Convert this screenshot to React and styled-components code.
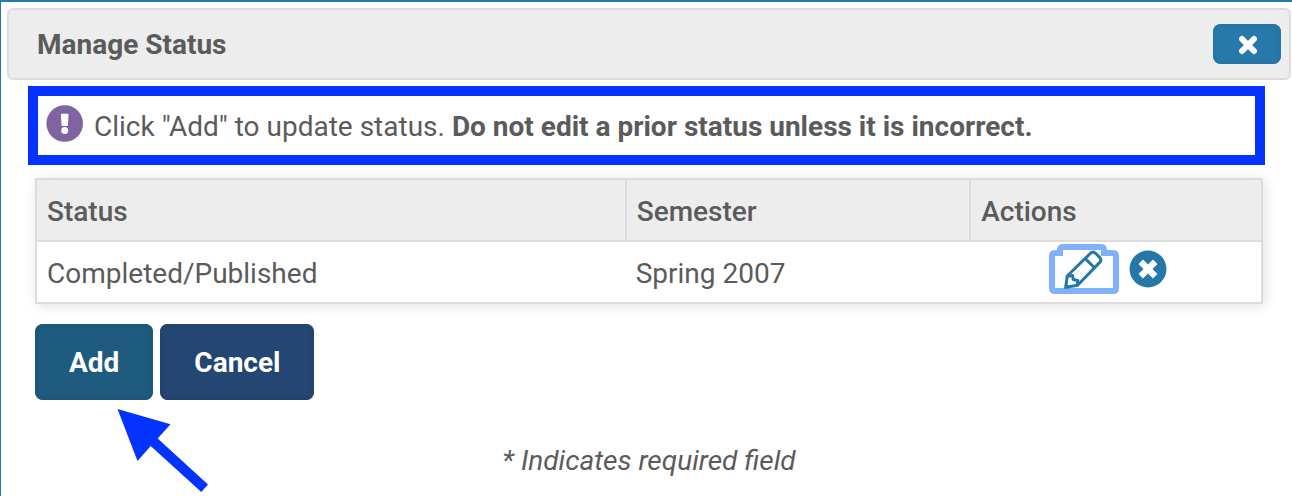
import React from "react";
import styled, { createGlobalStyle } from "styled-components";

const GlobalStyle = createGlobalStyle`
  *, *::before, *::after { box-sizing: border-box; }
  body {
    margin: 0;
    background: #ffffff;
    color: #5b5b5b;
    font-family: Roboto, "Liberation Sans", sans-serif;
    font-size: 28px;
    line-height: 32px;
  }
`;

const Dialog = styled.main`
  min-height: 100vh;
  padding: 6px 1px 0 6px;
  border-top: 2px solid #2779aa;
  border-left: 1px solid #2779aa;
`;

const TitleBar = styled.header`
  display: flex;
  align-items: center;
  justify-content: space-between;
  height: 72px;
  padding: 0 8px 0 28px;
  background: #ededed;
  border: 2px solid #dcdcdc;
  border-radius: 6px;
`;

const Title = styled.h1`
  margin: 0;
  padding-top: 2px;
  font-size: 28px;
  line-height: 32px;
  font-weight: 700;
`;

const CloseButton = styled.button`
  display: flex;
  align-items: center;
  justify-content: center;
  width: 68px;
  height: 40px;
  padding: 2px 0 0 2px;
  border: 0;
  border-radius: 8px;
  background: #2779aa;
  box-shadow: inset 0 0 0 4px #2476a6;
  cursor: pointer;
`;

const Content = styled.div`
  padding: 6px 26px 0 21px;
`;

const Notice = styled.p`
  display: flex;
  align-items: center;
  gap: 11px;
  margin: 0;
  min-height: 79px;
  padding: 0 8px;
  border: 10px solid #0433ff;
`;

const NoticeIcon = styled.svg`
  flex: none;
  margin-bottom: 4px;
`;

const NoticeText = styled.span`
  padding-top: 2px;
`;

const Body = styled.div`
  padding: 13px 2px 0 7px;
`;

const Table = styled.table`
  width: 100%;
  table-layout: fixed;
  border-collapse: collapse;
  border: 2px solid #dcdcdc;
  box-shadow: 2px 2px 12px rgba(0, 0, 0, 0.12);
`;

const Column = styled.col`
  width: ${(p) => p.$share};
`;

const HeaderCell = styled.th`
  height: 62px;
  padding: 4px 10px 0;
  border: 2px solid #dcdcdc;
  background: #ededed;
  font-weight: 500;
  text-align: left;
`;

const Cell = styled.td`
  height: 62px;
  padding: ${(p) => (p.$icons ? "2px 10px 8px" : "4px 10px 0")};
`;

const Actions = styled.div`
  display: flex;
  justify-content: center;
  gap: 10px;
  padding-right: 16px;
`;

const IconButton = styled.button`
  display: flex;
  align-items: center;
  padding: 0;
  border: 0;
  background: transparent;
  outline: none;
  cursor: pointer;
`;

const ButtonRow = styled.div`
  position: relative;
  display: flex;
  gap: 7px;
  margin-top: 20px;
`;

const Button = styled.button`
  height: 76px;
  padding: 2px 34px 0;
  border: 0;
  border-radius: 8px;
  background: ${(p) => (p.$secondary ? "#234672" : "#1e5b7e")};
  box-shadow: inset 0 0 0 4px ${(p) => (p.$secondary ? "#22446f" : "#1d587a")};
  color: #ffffff;
  font: 700 28px/32px Roboto, "Liberation Sans", sans-serif;
  cursor: pointer;
`;

const Pointer = styled.svg`
  position: absolute;
  top: 84px;
  left: 82px;
  pointer-events: none;
`;

const RequiredNote = styled.p`
  margin: 45px 0 0;
  font-style: italic;
  text-align: center;
`;

function CloseIcon() {
  return (
    <svg width="20" height="20" viewBox="-10 -10 20 20" aria-hidden="true">
      <path d="M-6 -6L6 6M6 -6L-6 6" stroke="#ffffff" strokeWidth="6" strokeLinecap="round" />
    </svg>
  );
}

function AlertIcon() {
  return (
    <NoticeIcon width="37" height="37" viewBox="0 0 37 37" aria-hidden="true">
      <circle cx="18.7" cy="18.5" r="18.3" fill="#8064a2" />
      <path d="M15.6 8.8H21.8Q22.5 8.8 22.5 9.6L21.9 20.2Q21.8 21 21 21H16.4Q15.6 21 15.5 20.2L14.9 9.6Q14.9 8.8 15.6 8.8Z" fill="#fff" />
      <ellipse cx="18.7" cy="25.6" rx="3.5" ry="3.5" fill="#fff" />
    </NoticeIcon>
  );
}

function EditIcon() {
  return (
    <svg width="70" height="50" viewBox="0 0 70 50" aria-hidden="true">
      <path
        d="M14 0H52Q58 0 58 6H64Q70 6 70 12V44Q70 50 64 50H6Q0 50 0 44V12Q0 6 6 6H8Q8 0 14 0ZM14 6V12H6V44H64V12H52V6Z"
        fill="#80b1fb"
        fillRule="evenodd"
      />
      <g fill="none" stroke="#2577a7" strokeWidth="3" strokeLinejoin="round">
        <path d="M16.8 43.3L18.2 32L41.5 9.3Q44 6.9 46.6 9.3L50.9 13.6Q52.9 16 50.7 18.4L28.6 41.2Z" />
        <path d="M36.2 14.6L45.6 23.8" />
        <path d="M18.6 32.2L23.6 31.4L24.2 35.6L28.8 36.4L28.4 41" />
      </g>
      <path d="M15.3 44.8L16.2 38.8L21.6 43.8Z" fill="#2577a7" />
    </svg>
  );
}

function DeleteIcon() {
  return (
    <svg width="38" height="38" viewBox="-19 -19 38 38" aria-hidden="true">
      <circle r="18.5" fill="#2577a7" />
      <path
        d="M-5 -9.2L0 -4.2L5 -9.2L9.2 -5L4.2 0L9.2 5L5 9.2L0 4.2L-5 9.2L-9.2 5L-4.2 0L-9.2 -5Z"
        fill="#fff"
        stroke="#fff"
        strokeWidth="0.6"
        strokeLinejoin="round"
      />
    </svg>
  );
}

export default function App() {
  return (
    <>
      <GlobalStyle />
      <Dialog>
        <TitleBar>
          <Title>Manage Status</Title>
          <CloseButton type="button" aria-label="Close">
            <CloseIcon />
          </CloseButton>
        </TitleBar>
        <Content>
          <Notice>
            <AlertIcon />
            <NoticeText>
              Click "Add" to update status.{" "}
              <strong>Do not edit a prior status unless it is incorrect.</strong>
            </NoticeText>
          </Notice>
          <Body>
            <Table>
              <colgroup>
                <Column $share="48.1%" />
                <Column $share="28.1%" />
                <Column $share="23.8%" />
              </colgroup>
              <thead>
                <tr>
                  <HeaderCell scope="col">Status</HeaderCell>
                  <HeaderCell scope="col">Semester</HeaderCell>
                  <HeaderCell scope="col">Actions</HeaderCell>
                </tr>
              </thead>
              <tbody>
                <tr>
                  <Cell>Completed/Published</Cell>
                  <Cell>Spring 2007</Cell>
                  <Cell $icons>
                    <Actions>
                      <IconButton type="button" aria-label="Edit status">
                        <EditIcon />
                      </IconButton>
                      <IconButton type="button" aria-label="Delete status">
                        <DeleteIcon />
                      </IconButton>
                    </Actions>
                  </Cell>
                </tr>
              </tbody>
            </Table>
            <ButtonRow>
              <Button type="button">Add</Button>
              <Button type="button" $secondary>Cancel</Button>
              <Pointer width="92" height="86" viewBox="0 0 92 86" aria-hidden="true">
                <path
                  d="M0.5 1L53.5 16.3L40.7 30.5L91 76.5L84.3 84L33.7 38L20.5 53Z"
                  fill="#0433ff"
                />
              </Pointer>
            </ButtonRow>
            <RequiredNote>* Indicates required field</RequiredNote>
          </Body>
        </Content>
      </Dialog>
    </>
  );
}
